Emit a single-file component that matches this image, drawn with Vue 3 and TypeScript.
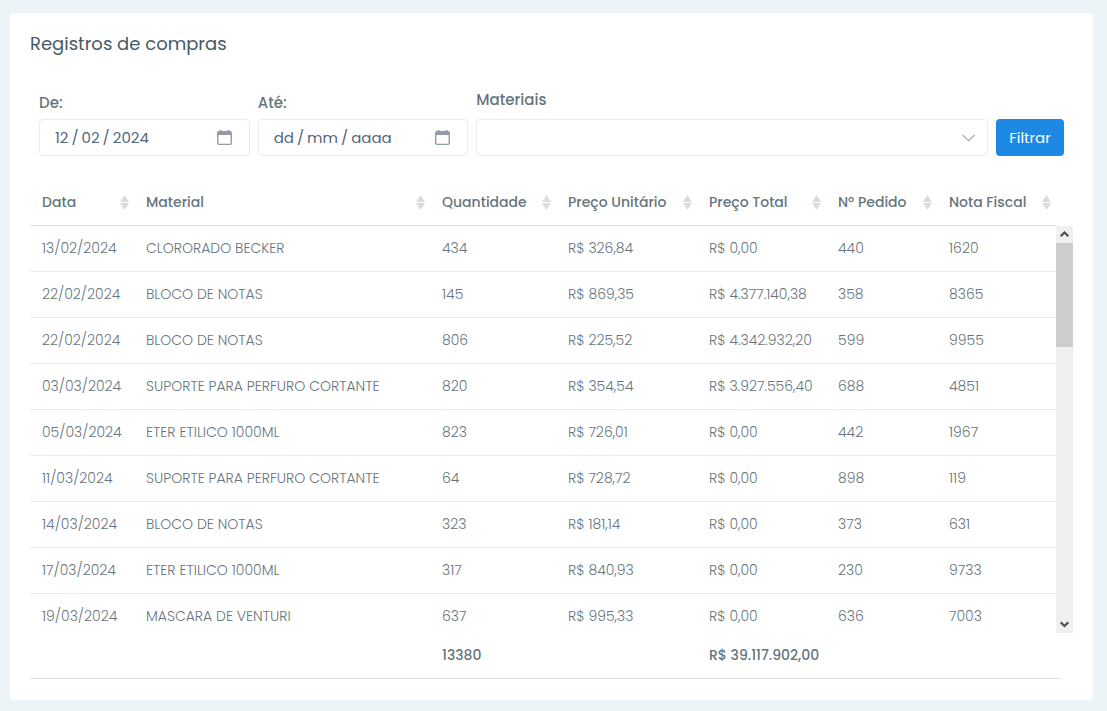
<script setup lang="ts">
import { computed, ref } from 'vue'

interface Purchase {
  date: string
  material: string
  quantity: number
  unitPrice: string
  totalPrice: string
  order: number
  invoice: number
}

const columns = ['Data', 'Material', 'Quantidade', 'Preço Unitário', 'Preço Total', 'Nº Pedido', 'Nota Fiscal']

const purchases: Purchase[] = [
  { date: '13/02/2024', material: 'CLORORADO BECKER', quantity: 434, unitPrice: '326,84', totalPrice: '0,00', order: 440, invoice: 1620 },
  { date: '22/02/2024', material: 'BLOCO DE NOTAS', quantity: 145, unitPrice: '869,35', totalPrice: '4.377.140,38', order: 358, invoice: 8365 },
  { date: '22/02/2024', material: 'BLOCO DE NOTAS', quantity: 806, unitPrice: '225,52', totalPrice: '4.342.932,20', order: 599, invoice: 9955 },
  { date: '03/03/2024', material: 'SUPORTE PARA PERFURO CORTANTE', quantity: 820, unitPrice: '354,54', totalPrice: '3.927.556,40', order: 688, invoice: 4851 },
  { date: '05/03/2024', material: 'ETER ETILICO 1000ML', quantity: 823, unitPrice: '726,01', totalPrice: '0,00', order: 442, invoice: 1967 },
  { date: '11/03/2024', material: 'SUPORTE PARA PERFURO CORTANTE', quantity: 64, unitPrice: '728,72', totalPrice: '0,00', order: 898, invoice: 119 },
  { date: '14/03/2024', material: 'BLOCO DE NOTAS', quantity: 323, unitPrice: '181,14', totalPrice: '0,00', order: 373, invoice: 631 },
  { date: '17/03/2024', material: 'ETER ETILICO 1000ML', quantity: 317, unitPrice: '840,93', totalPrice: '0,00', order: 230, invoice: 9733 },
  { date: '19/03/2024', material: 'MASCARA DE VENTURI', quantity: 637, unitPrice: '995,33', totalPrice: '0,00', order: 636, invoice: 7003 },
]

const totalRows = 32
const from = ref('12\u2009/\u200902\u2009/\u20092024')
const to = ref('')
const datePattern = 'dd\u2009/\u2009mm\u2009/\u2009aaaa'
const material = ref('')
const body = ref<HTMLElement | null>(null)

const thumbHeight = computed(() => `${Math.round((purchases.length / totalRows) * 98)}%`)

function scrollRows(step: number) {
  body.value?.scrollBy({ top: step * 46 })
}
</script>

<template>
  <main class="page">
    <section class="card">
      <h1 class="title">Registros de compras</h1>

      <form class="filters" @submit.prevent>
        <div class="field">
          <label for="from">De:</label>
          <div class="control">
            <input id="from" v-model="from" type="text" :placeholder="datePattern" />
            <button type="button" class="calendar" aria-label="Abrir calendário">
              <svg viewBox="0 0 15 16" width="15" height="16">
                <path d="M2.500 0h2v1h6V0h2v1h.5a2 2 0 0 1 2 2v10a2 2 0 0 1-2 2H2a2 2 0 0 1-2-2V3a2 2 0 0 1 2-2h.5zM1.400 5v8q0 .7.7.7h10.800q.7 0 .7-.7V5z" fill="currentColor" fill-rule="evenodd" />
              </svg>
            </button>
          </div>
        </div>
        <div class="field">
          <label for="to">Até:</label>
          <div class="control">
            <input id="to" v-model="to" type="text" :placeholder="datePattern" />
            <button type="button" class="calendar" aria-label="Abrir calendário">
              <svg viewBox="0 0 15 16" width="15" height="16">
                <path d="M2.500 0h2v1h6V0h2v1h.5a2 2 0 0 1 2 2v10a2 2 0 0 1-2 2H2a2 2 0 0 1-2-2V3a2 2 0 0 1 2-2h.5zM1.400 5v8q0 .7.7.7h10.800q.7 0 .7-.7V5z" fill="currentColor" fill-rule="evenodd" />
              </svg>
            </button>
          </div>
        </div>
        <div class="field field-wide">
          <label for="material">Materiais</label>
          <div class="control">
            <select id="material" v-model="material">
              <option value=""></option>
              <option>BLOCO DE NOTAS</option>
              <option>ETER ETILICO 1000ML</option>
            </select>
            <svg class="chevron" viewBox="0 0 13 8" width="13" height="8">
              <path d="M.5 1 6.500 6.700 12.500 1" fill="none" stroke="currentColor" stroke-width="1.100" />
            </svg>
          </div>
        </div>
        <button type="submit" class="submit">Filtrar</button>
      </form>

      <div class="grid">
        <table>
          <thead>
            <tr>
              <th v-for="column in columns" :key="column" scope="col">
                <span>{{ column }}</span>
                <svg class="sort" viewBox="0 0 9 15" width="9" height="15">
                  <path d="M4.500 0 9 7H0zM4.500 15 9 8H0z" fill="currentColor" />
                </svg>
              </th>
            </tr>
          </thead>
          <tbody ref="body">
            <tr v-for="row in purchases" :key="row.date + row.order">
              <td>{{ row.date }}</td>
              <td>{{ row.material }}</td>
              <td>{{ row.quantity }}</td>
              <td>R$ {{ row.unitPrice }}</td>
              <td>R$ {{ row.totalPrice }}</td>
              <td>{{ row.order }}</td>
              <td>{{ row.invoice }}</td>
            </tr>
          </tbody>
          <tfoot>
            <tr>
              <td></td>
              <td></td>
              <td>13380</td>
              <td></td>
              <td>R$ 39.117.902,00</td>
              <td></td>
              <td></td>
            </tr>
          </tfoot>
        </table>
        <div class="scrollbar">
          <button type="button" aria-label="Rolar para cima" @click="scrollRows(-1)">
            <svg viewBox="0 0 9 7" width="9" height="7">
              <path d="M.7 5.200 4.500 1.500 8.300 5.200" fill="none" stroke="currentColor" stroke-width="2.200" />
            </svg>
          </button>
          <div class="track">
            <div class="thumb" :style="{ height: thumbHeight }"></div>
          </div>
          <button type="button" aria-label="Rolar para baixo" @click="scrollRows(1)">
            <svg viewBox="0 0 9 7" width="9" height="7">
              <path d="M.7 1.300 4.500 5 8.300 1.300" fill="none" stroke="currentColor" stroke-width="2.200" />
            </svg>
          </button>
        </div>
      </div>
    </section>
  </main>
</template>

<style>
body {
  background: #edf4f8;
}
</style>

<style scoped>
* {
  box-sizing: border-box;
}

.page {
  padding: 13px 14px 11px 10px;
  font-family: Poppins, Inter, 'Liberation Sans', sans-serif;
  font-size: 14px;
  color: #67757c;
}

.card {
  padding: 16px 20px 21px;
  background: #fff;
  border-radius: 4px;
}

.title {
  margin: 0;
  font-size: 18px;
  font-weight: 400;
  line-height: 30px;
  color: #455a64;
}

.filters {
  display: grid;
  grid-template-columns: 7fr 7fr 17fr 68px;
  align-items: end;
  gap: 8px;
  margin-top: 31px;
  padding: 0 9px;
}

.field label {
  display: block;
  padding-bottom: 6px;
  font-size: 15px;
  font-weight: 500;
  line-height: 20px;
}

.field-wide label {
  padding-bottom: 9px;
}

.control {
  display: flex;
  align-items: center;
  height: 37px;
  border: 1px solid #e9ecef;
  border-radius: 4px;
}

.control input,
.control select {
  width: 100%;
  height: 100%;
  padding: 0 15px;
  border: 0;
  outline: 0;
  background: transparent;
  font: inherit;
  font-size: 15px;
  color: #54667a;
  appearance: none;
}

.control input::placeholder {
  color: #54667a;
  opacity: 1;
}

button {
  padding: 0;
  border: 0;
  background: transparent;
  font: inherit;
}

.calendar {
  flex: none;
  margin-right: 17px;
  color: #919ba9;
}

.calendar svg {
  display: block;
}

.chevron {
  flex: none;
  margin-right: 12px;
  color: #a5abb0;
}

.submit {
  height: 37px;
  border-radius: 4px;
  background: #1e88e5;
  font-size: 15px;
  color: #fff;
}

.grid {
  display: grid;
  grid-template-columns: 1fr 17px;
  grid-template-rows: 47px 407px 46px;
  margin-top: 23px;
}

table {
  display: contents;
}

thead,
tbody,
tfoot {
  display: block;
  grid-column: 1;
}

thead {
  border-bottom: 1px solid #dee2e6;
}

tbody {
  overflow: hidden;
}

tfoot {
  grid-column: 1 / 3;
  margin-right: 12px;
  padding-right: 5px;
  border-bottom: 1px solid #dee2e6;
}

tr {
  display: grid;
  grid-template-columns: 104fr 296fr 126fr 141fr 129fr 111fr 119fr;
}

tbody tr {
  height: 46px;
  border-bottom: 1px solid #e9ecef;
}

tbody tr:last-child {
  border-bottom: 0;
}

th,
td {
  padding: 0 0 0 12px;
  line-height: 45px;
  text-align: left;
  white-space: nowrap;
}

th {
  display: flex;
  align-items: center;
  justify-content: space-between;
  padding-right: 5px;
  font-weight: 500;
  line-height: 46px;
}

td {
  font-weight: 300;
}

tfoot td {
  font-weight: 500;
}

.sort {
  flex: none;
  color: #dcdcdc;
}

.scrollbar {
  display: flex;
  flex-direction: column;
  grid-column: 2;
  grid-row: 2;
  background: #f0f0f0;
}

.scrollbar button {
  display: grid;
  place-items: center;
  height: 17px;
  color: #505050;
}

.track {
  flex: 1;
}

.thumb {
  background: #cdcdcd;
}
</style>
